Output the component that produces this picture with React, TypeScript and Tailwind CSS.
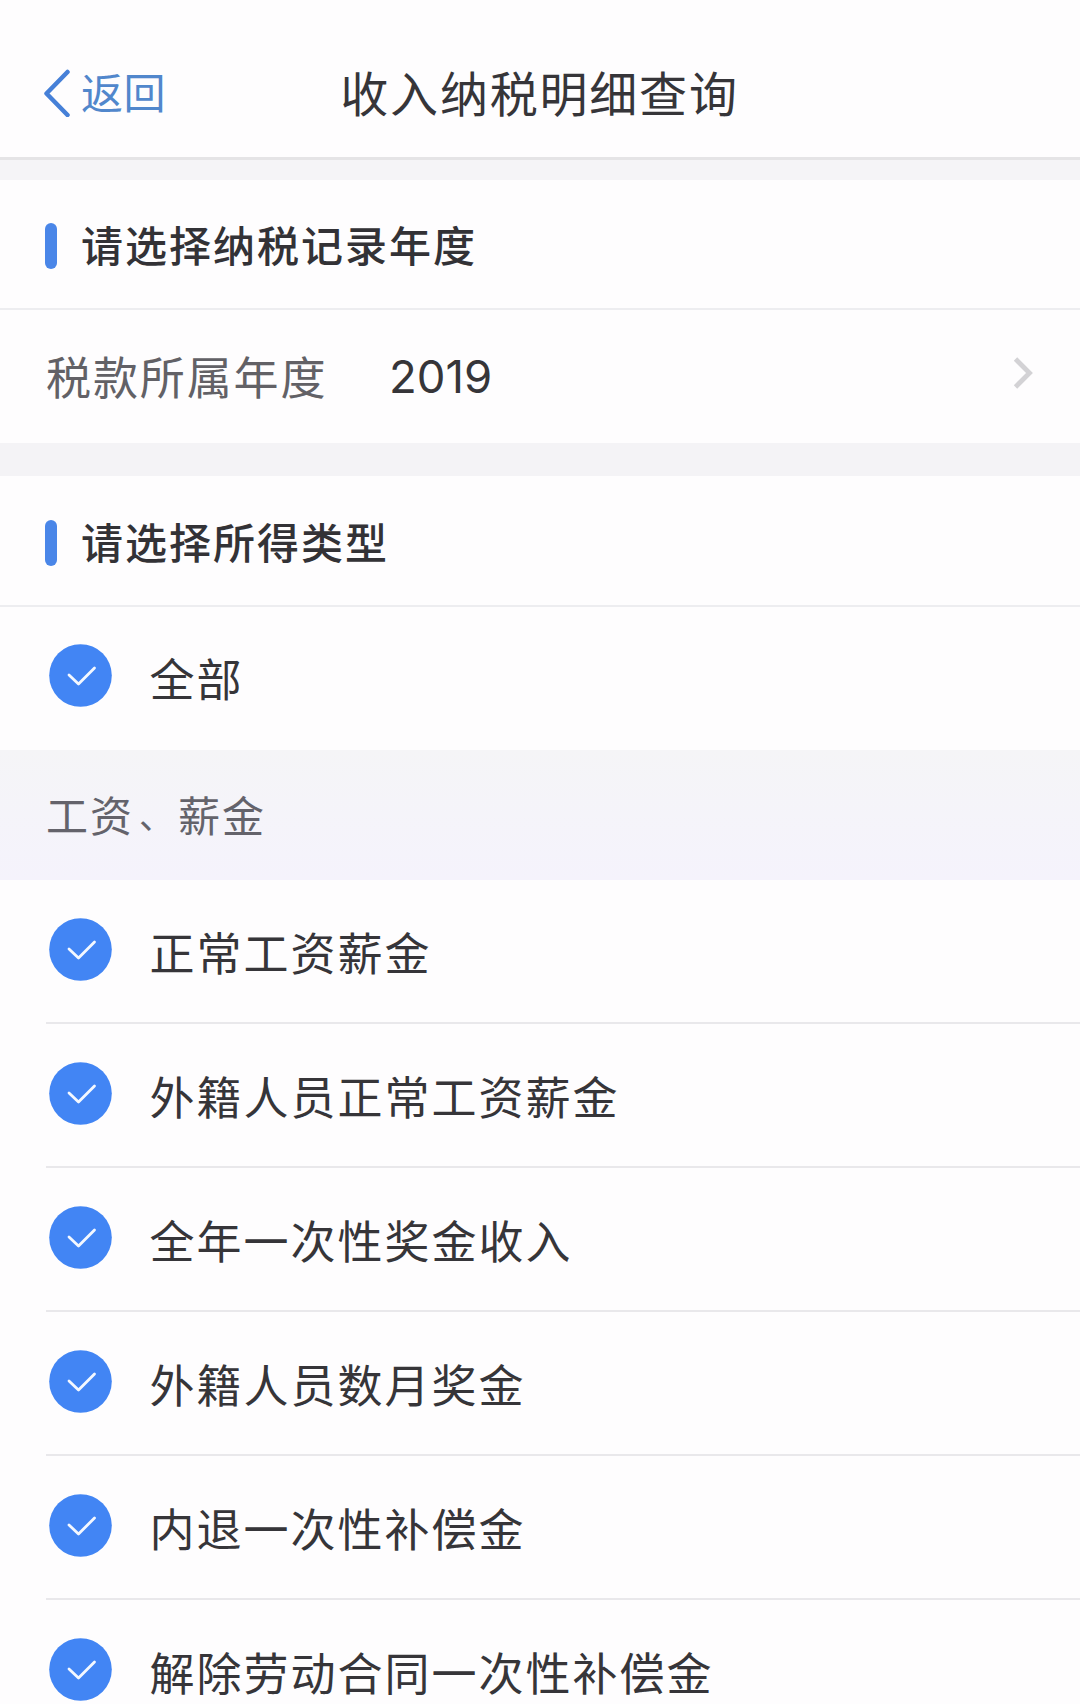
const incomeTypes = [
  '正常工资薪金',
  '外籍人员正常工资薪金',
  '全年一次性奖金收入',
  '外籍人员数月奖金',
  '内退一次性补偿金',
  '解除劳动合同一次性补偿金',
];

function CheckCircle() {
  return (
    <svg className="mb-[4px] size-[63px] shrink-0" viewBox="0 0 63 63" fill="none">
      <circle cx="31.5" cy="31.5" r="31.3" fill="#4285f4" />
      <path d="M20 31 L29.5 40 L45.5 24" stroke="#f4f8ff" strokeWidth="2.8" strokeLinecap="round" strokeLinejoin="round" />
    </svg>
  );
}

function SectionTitle({ children }: { children: string }) {
  return (
    <div className="flex h-[130px] shrink-0 items-center border-b-2 border-[#ededf0] bg-[#fefdfe] pl-[45px]">
      <span className="mt-[4px] h-[46px] w-[12px] rounded-full bg-[#4a86e8]" />
      <h2 className="ml-[24px] text-[42px] leading-none font-medium tracking-[2px] text-[#333236]">{children}</h2>
    </div>
  );
}

function CheckRow({ label }: { label: string }) {
  return (
    <div className="flex h-full items-center pl-[2.5px]">
      <CheckCircle />
      <span className="ml-[38px] text-[45px] leading-none tracking-[2px] whitespace-nowrap">{label}</span>
    </div>
  );
}

export default function App() {
  return (
    <div className="flex h-[1704px] w-[1080px] flex-col overflow-hidden bg-[#fefdfe] font-['Noto_Sans_CJK_SC',sans-serif] text-[#363539]">
      <header className="grid h-[160px] shrink-0 grid-cols-[1fr_auto_1fr] items-center border-b-[3px] border-[#e5e4e6] pt-[29px]">
        <button className="flex items-center pl-[42px] text-[#5187cc]">
          <svg className="h-[48px] w-[28px]" viewBox="0 0 28 48" fill="none">
            <path d="M25.5 3 L4.5 24.5 L25.5 46" stroke="#4680d8" strokeWidth="4.5" strokeLinecap="round" strokeLinejoin="round" />
          </svg>
          <span className="mb-[4px] ml-[11px] text-[42px] leading-none tracking-[0.5px]">返回</span>
        </button>
        <h1 className="mb-[4px] -ml-px text-[48px] leading-none tracking-[1.8px]">收入纳税明细查询</h1>
      </header>
      <div className="h-[20px] shrink-0 bg-[#f5f4f7]" />
      <SectionTitle>请选择纳税记录年度</SectionTitle>
      <div className="flex h-[133px] shrink-0 items-center pr-[47px] pl-[46px]">
        <span className="mb-[3px] text-[45px] leading-none tracking-[1.9px] text-[#626166]">税款所属年度</span>
        <span className="mt-px ml-[61.6px] font-['Inter',sans-serif] text-[45.5px] leading-none">2019</span>
        <svg className="mb-[8px] ml-auto h-[34px] w-[20px]" viewBox="0 0 20 34" fill="none">
          <path d="M2.5 3 L16.5 17 L2.5 31" stroke="#d3d2d5" strokeWidth="4.8" />
        </svg>
      </div>
      <div className="h-[33px] shrink-0 bg-[#f4f3f6]" />
      <div className="flex shrink-0 flex-col pt-px">
        <SectionTitle>请选择所得类型</SectionTitle>
      </div>
      <div className="h-[143px] shrink-0 pb-[2px] pl-[46px]">
        <CheckRow label="全部" />
      </div>
      <div className="flex h-[130px] shrink-0 items-center bg-linear-to-b from-[#f5f5f7] to-[#f5f3fc] pb-[2px] pl-[46px] text-[42px] leading-none tracking-[2px] text-[#64636b]">
        <span>工资</span>
        <span className="ml-[5px] w-[39px] text-[35px] leading-[42px]">、</span>
        <span>薪金</span>
      </div>
      <ul className="pl-[46px]">
        {incomeTypes.map((label) => (
          <li key={label} className="h-[144px] border-b-2 border-[#e9e8eb] pt-px">
            <CheckRow label={label} />
          </li>
        ))}
      </ul>
    </div>
  );
}
